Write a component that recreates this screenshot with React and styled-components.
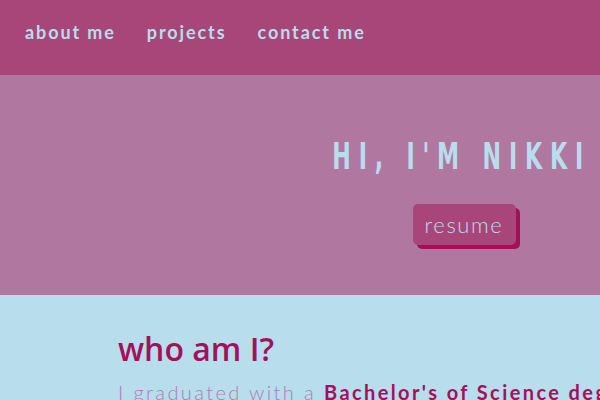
import React from 'react'
import styled, { createGlobalStyle } from 'styled-components'

const Global = createGlobalStyle`
   html, body {
      margin: 0;
      padding: 0;
      overflow: hidden;
      background: #b8dded;
   }
   body {
      font-family: 'Lato', 'Noto Sans', sans-serif;
   }
`

const links = ['about me', 'projects', 'contact me']

function App() {
   return (
      <>
         <Global />
         <Nav>
            {links.map((l) => (
               <NavLink key={l} href="#">
                  {l}
               </NavLink>
            ))}
         </Nav>
         <Hero>
            <HeroInner>
               <Title>HI, I'M NIKKI</Title>
               <ResumeButton>resume</ResumeButton>
            </HeroInner>
         </Hero>
         <About>
            <Heading>who am I?</Heading>
            <Text>
               I graduated with a <strong>Bachelor's of Science degree</strong>
            </Text>
         </About>
      </>
   )
}

export default App

const Nav = styled.nav`
   display: flex;
   align-items: center;
   gap: 31px;
   height: 75px;
   padding: 0 25px;
   box-sizing: border-box;
   background-color: #a8467a;
`

const NavLink = styled.a`
   color: #b8dded;
   text-decoration: none;
   font-family: 'Lato', sans-serif;
   font-weight: 700;
   font-size: 18px;
   letter-spacing: 1.9px;
   margin-top: -11px;
`

const Hero = styled.section`
   height: 220px;
   background-color: #b077a0;
   display: flex;
   padding-left: 324px;
   box-sizing: border-box;
   overflow: hidden;
`

const HeroInner = styled.div`
   display: flex;
   flex-direction: column;
   align-items: center;
   padding-top: 62px;
   width: 276px;
`

const Title = styled.h1`
   margin: 0;
   white-space: nowrap;
   color: #b8dded;
   font-family: 'DejaVu Sans', sans-serif;
   font-weight: 700;
   font-size: 37px;
   line-height: 40px;
   letter-spacing: 13px;
   transform: scaleX(0.6);
   transform-origin: center;
`

const ResumeButton = styled.button`
   margin-top: 27px;
   margin-left: 4px;
   width: 103px;
   height: 41px;
   border: none;
   border-radius: 5px;
   background-color: #a8467a;
   box-shadow: 4px 4px 0 #a30f58;
   color: #b8dded;
   font-family: 'Lato', sans-serif;
   font-weight: 300;
   font-size: 22px;
   letter-spacing: 1.6px;
   cursor: pointer;
`

const About = styled.section`
   padding: 29px 118px 0;
`

const Heading = styled.h2`
   margin: 0;
   color: #a3115a;
   font-family: 'Open Sans', sans-serif;
   font-weight: 600;
   font-size: 32px;
   line-height: 50px;
`

const Text = styled.p`
   margin: 6px 0 0;
   white-space: nowrap;
   color: #b07bb0;
   font-family: 'Lato', sans-serif;
   font-weight: 300;
   font-size: 20px;
   letter-spacing: 2.4px;
   & strong {
      color: #a3115a;
      font-weight: 700;
   }
`
